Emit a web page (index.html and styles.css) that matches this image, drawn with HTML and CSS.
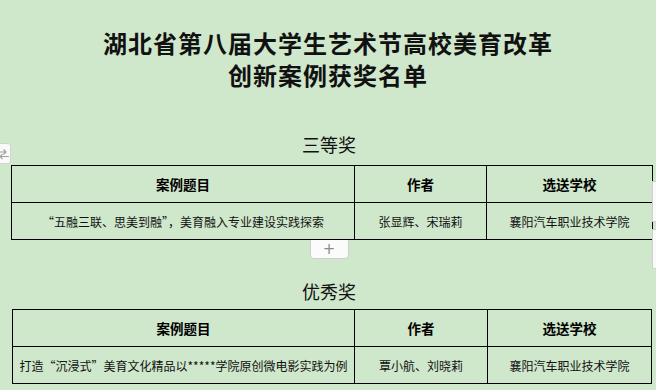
FILE: index.html
```html
<!DOCTYPE html>
<html lang="zh-CN">
<head>
<meta charset="utf-8">
<title>获奖名单</title>
<link rel="stylesheet" href="styles.css">
</head>
<body>
<div class="page">
  <h1 class="title"><span class="title-line">湖北省第八届大学生艺术节高校美育改革</span><span class="title-line">创新案例获奖名单</span></h1>

  <section class="award">
    <h2 class="award-name">三等奖</h2>
    <table class="list list-a">
      <colgroup><col class="c1"><col class="c2"><col class="c3"></colgroup>
      <thead>
        <tr><th>案例题目</th><th>作者</th><th>选送学校</th></tr>
      </thead>
      <tbody>
        <tr><td>“五融三联、思美到融”，美育融入专业建设实践探索</td><td>张显辉、宋瑞莉</td><td>襄阳汽车职业技术学院</td></tr>
      </tbody>
    </table>
    <div class="add-row"><button class="add-btn" type="button">+</button></div>
  </section>

  <section class="award award-second">
    <h2 class="award-name">优秀奖</h2>
    <table class="list list-b">
      <colgroup><col class="c1"><col class="c2"><col class="c3"></colgroup>
      <thead>
        <tr><th>案例题目</th><th>作者</th><th>选送学校</th></tr>
      </thead>
      <tbody>
        <tr><td>打造“沉浸式”美育文化精品以*****学院原创微电影实践为例</td><td>覃小航、刘晓莉</td><td>襄阳汽车职业技术学院</td></tr>
      </tbody>
    </table>
  </section>

  <div class="side-handle">
    <svg width="12" height="14" viewBox="0 0 12 14" fill="none" stroke="#a0a0a0" stroke-width="1.2">
      <path d="M0 5h9M6.5 2.5L9 5l-2.5 2.5M12 9.5H3M5.5 7L3 9.5 5.5 12"/>
    </svg>
  </div>
  <div class="edge-panel edge-top"></div>
  <div class="edge-panel edge-bottom"></div>
</div>
</body>
</html>
```

FILE: styles.css
```css
* { box-sizing: border-box; }
html, body {
  margin: 0;
  padding: 0;
  background: #cfe7cb;
}
body {
  font-family: "Noto Sans CJK SC", "Noto Sans", sans-serif;
  color: #000;
}
.page {
  position: relative;
  width: 656px;
  height: 390px;
  overflow: hidden;
  padding-top: 27px;
}
.title {
  margin: 0;
  text-align: center;
  font-family: "Noto Sans CJK SC", serif;
  font-weight: 700;
  font-size: 24px;
  letter-spacing: 1px;
  color: #111;
}
.title-line {
  display: block;
  line-height: 32px;
}
.award-name {
  margin: 0;
  text-align: center;
  font-weight: 400;
  font-size: 18px;
  line-height: 24px;
  color: #111;
  padding-left: 2px;
}
.award:first-of-type .award-name { margin-top: 41px; margin-bottom: 9px; }
.award-second .award-name { margin-top: 20px; margin-bottom: 6px; }

.list {
  border-collapse: collapse;
  table-layout: fixed;
}
.list-a { width: 641px; margin-left: 11px; }
.list-b { width: 639px; margin-left: 12px; }
.list-a .c1 { width: 343px; }
.list-a .c2 { width: 132px; }
.list-a .c3 { width: 166px; }
.list-b .c1 { width: 342px; }
.list-b .c2 { width: 133px; }
.list-b .c3 { width: 164px; }
.list th, .list td {
  border: 1px solid #000;
  height: 37px;
  padding: 0 4px;
  text-align: center;
  vertical-align: middle;
  white-space: nowrap;
}
.list th {
  font-size: 13.5px;
  font-weight: 700;
}
.list td {
  font-size: 12px;
  font-weight: 400;
  color: #111;
}
.add-row {
  display: flex;
  justify-content: center;
  padding-left: 2px;
}
.add-btn {
  width: 39px;
  height: 19px;
  margin: 0;
  padding: 0;
  border: 1px solid #cfcfcf;
  border-top: none;
  border-radius: 0 0 4px 4px;
  background: #fbfbfb;
  color: #8a8a8a;
  font-family: "DejaVu Sans", sans-serif;
  font-size: 15px;
  line-height: 17px;
}
.side-handle {
  position: absolute;
  left: -5px;
  top: 143px;
  width: 16px;
  height: 21px;
  background: #fafafa;
  border: 1px solid #d4d4d4;
  border-radius: 3px;
  display: flex;
  align-items: center;
  justify-content: flex-end;
  padding-right: 1px;
}
.edge-panel {
  position: absolute;
  left: 652px;
  width: 8px;
  background: #fafafa;
  border: 1px solid #d0d0d0;
}
.edge-top { top: 181px; height: 41px; }
.edge-bottom { top: 229px; height: 40px; }
```
